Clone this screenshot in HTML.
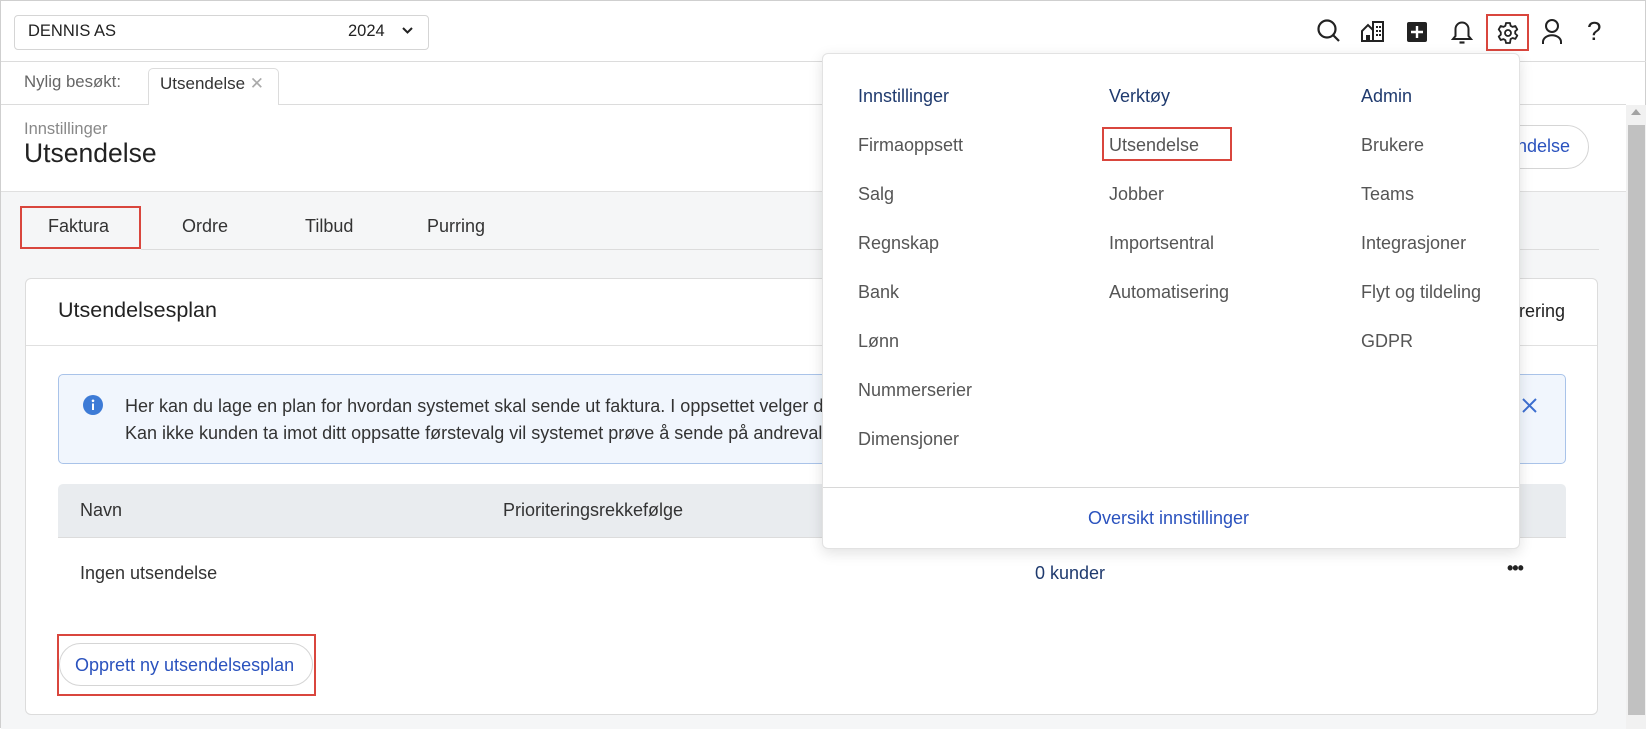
<!DOCTYPE html>
<html><head><meta charset="utf-8"><style>
*{box-sizing:border-box;margin:0;padding:0}
body{width:1646px;height:728px;overflow:hidden;font-family:"Liberation Sans",sans-serif;color:#222;background:#fff;position:relative;border:1px solid #cfcfcf}
.a{position:absolute;white-space:nowrap}
.ic{position:absolute;top:17px}
.dd div{position:absolute;font-size:18px;color:#555}
.dd .h{color:#1f3a6e;font-size:18px}
</style></head><body>
<!-- top bar -->
<div class="a" style="left:0;top:60px;width:1646px;height:1px;background:#dcdcdc"></div>
<div class="a" style="left:13px;top:14px;width:415px;height:35px;border:1px solid #d5d5d5;border-radius:4px"></div>
<div class="a" style="left:27px;top:21px;font-size:16.5px">DENNIS AS</div>
<div class="a" style="left:347px;top:21px;font-size:16.5px">2024</div>
<svg class="a" style="left:400px;top:25px" width="13" height="10" viewBox="0 0 13 10"><path d="M2 2l4.5 4.5L11 2" fill="none" stroke="#222" stroke-width="2"/></svg>
<!-- icons -->
<svg class="ic" style="left:1315px" width="26" height="26" viewBox="0 0 26 26"><circle cx="11" cy="11" r="8.5" fill="none" stroke="#222" stroke-width="2.2"/><path d="M17 17l6 6" stroke="#222" stroke-width="2.2"/></svg>
<svg class="ic" style="left:1359px" width="26" height="26" viewBox="0 0 26 26"><path d="M2 23V13l6-6 5 5V23zM13 23V4h10v19z" fill="none" stroke="#222" stroke-width="2"/><rect x="16" y="8" width="2" height="2" fill="#222"/><rect x="19" y="8" width="2" height="2" fill="#222"/><rect x="16" y="12" width="2" height="2" fill="#222"/><rect x="19" y="12" width="2" height="2" fill="#222"/><rect x="16" y="16" width="2" height="2" fill="#222"/><rect x="19" y="16" width="2" height="2" fill="#222"/><rect x="6" y="17" width="4" height="6" fill="#222"/></svg>
<svg class="ic" style="left:1406px;top:21px" width="20" height="20" viewBox="0 0 20 20"><rect width="20" height="20" rx="2" fill="#222"/><path d="M10 4v12M4 10h12" stroke="#fff" stroke-width="2.4"/></svg>
<svg class="ic" style="left:1448px" width="26" height="28" viewBox="0 0 26 28"><path d="M4 21h18l-2.5-3V11a6.5 6.5 0 0 0-13 0v7z" fill="none" stroke="#222" stroke-width="2"/><path d="M10.5 24.5h5" stroke="#222" stroke-width="2.2"/></svg>
<div class="a" style="left:1485px;top:13px;width:43px;height:37px;border:2px solid #d9463d"></div>
<svg class="ic" style="left:1495px;top:20px" width="24" height="24" viewBox="0 0 24 24"><path d="M10 2h4l.6 2.8 2 1.1 2.7-.9 2 3.4-2.1 1.9v2.3l2.1 1.9-2 3.4-2.7-.9-2 1.1L14 22h-4l-.6-2.8-2-1.1-2.7.9-2-3.4 2.1-1.9v-2.3L2.7 8.4l2-3.4 2.7.9 2-1.1z" fill="none" stroke="#222" stroke-width="1.8" stroke-linejoin="round"/><circle cx="12" cy="12" r="3" fill="none" stroke="#222" stroke-width="1.8"/></svg>
<svg class="ic" style="left:1539px" width="24" height="28" viewBox="0 0 24 28"><circle cx="12" cy="8" r="6" fill="none" stroke="#222" stroke-width="2"/><path d="M3 26v-2a8 6 0 0 1 18 0v2" fill="none" stroke="#222" stroke-width="2"/></svg>
<div class="a" style="left:1586px;top:15px;font-size:26px;color:#222">?</div>
<!-- recently visited -->
<div class="a" style="left:0;top:103px;width:1625px;height:1px;background:#dcdcdc"></div>
<div class="a" style="left:23px;top:71px;font-size:16.8px;color:#666">Nylig besøkt:</div>
<div class="a" style="left:147px;top:67px;width:131px;height:37px;border:1px solid #dcdcdc;border-bottom:none;border-radius:5px 5px 0 0;background:#fff"></div>
<div class="a" style="left:159px;top:73px;font-size:17px;color:#333">Utsendelse <span style="color:#aaa">✕</span></div>
<!-- page header -->
<div class="a" style="left:23px;top:119px;font-size:16.5px;color:#888">Innstillinger</div>
<div class="a" style="left:23px;top:137px;font-size:26.5px;color:#222">Utsendelse</div>
<div class="a" style="left:1470px;top:124px;width:118px;height:44px;border:1px solid #d5d5d5;border-radius:22px;background:#fff"></div>
<div class="a" style="right:75px;top:135px;font-size:18px;color:#2a52be">ndelse</div>
<!-- gray area -->
<div class="a" style="left:0;top:190px;width:1625px;height:538px;background:#f5f6f7;border-top:1px solid #e0e0e0"></div>
<div class="a" style="left:47px;top:215px;font-size:18px;color:#333">Faktura</div>
<div class="a" style="left:19px;top:205px;width:121px;height:43px;border:2px solid #d9463d"></div>
<div class="a" style="left:181px;top:215px;font-size:18px;color:#333">Ordre</div>
<div class="a" style="left:304px;top:215px;font-size:18px;color:#333">Tilbud</div>
<div class="a" style="left:426px;top:215px;font-size:18px;color:#333">Purring</div>
<div class="a" style="left:140px;top:248px;width:1458px;height:1px;background:#dcdcdc"></div>
<!-- card -->
<div class="a" style="left:24px;top:277px;width:1573px;height:437px;background:#fff;border:1px solid #dcdcdc;border-radius:6px"></div>
<div class="a" style="left:57px;top:297px;font-size:21.5px;color:#222">Utsendelsesplan</div>
<div class="a" style="right:80px;top:300px;font-size:18px;color:#222">rering</div>
<div class="a" style="left:25px;top:344px;width:1571px;height:1px;background:#e0e0e0"></div>
<div class="a" style="left:57px;top:373px;width:1508px;height:90px;background:#f1f6fd;border:1px solid #a9c3e9;border-radius:5px"></div>
<svg class="a" style="left:82px;top:394px" width="20" height="20" viewBox="0 0 20 20"><circle cx="10" cy="10" r="10" fill="#3d7bd6"/><rect x="9" y="8.5" width="2" height="6.5" fill="#fff"/><circle cx="10" cy="5.8" r="1.3" fill="#fff"/></svg>
<div class="a" style="left:124px;top:392px;font-size:18px;color:#333;line-height:27px">Her kan du lage en plan for hvordan systemet skal sende ut faktura. I oppsettet velger du<br>Kan ikke kunden ta imot ditt oppsatte førstevalg vil systemet prøve å sende på andrevalg</div>
<svg class="a" style="left:1520px;top:396px" width="17" height="17" viewBox="0 0 17 17"><path d="M2 2l13 13M15 2L2 15" stroke="#3d6fd0" stroke-width="2"/></svg>
<div class="a" style="left:57px;top:483px;width:1508px;height:54px;background:#e9ecef;border-radius:5px 5px 0 0;border-bottom:1px solid #dcdcdc"></div>
<div class="a" style="left:79px;top:499px;font-size:18px;color:#333">Navn</div>
<div class="a" style="left:502px;top:499px;font-size:18px;color:#333">Prioriteringsrekkefølge</div>
<div class="a" style="left:79px;top:562px;font-size:18px;color:#333">Ingen utsendelse</div>
<div class="a" style="left:1034px;top:562px;font-size:18px;color:#1f3a6e">0 kunder</div>
<div class="a" style="left:1506px;top:557px;font-size:18px;color:#222;font-weight:bold;letter-spacing:-1px">•••</div>
<div class="a" style="left:58px;top:642px;width:254px;height:43px;border:1px solid #d5d5d5;border-radius:22px;background:#fff"></div>
<div class="a" style="left:74px;top:654px;font-size:18px;color:#2a52be">Opprett ny utsendelsesplan</div>
<div class="a" style="left:56px;top:633px;width:259px;height:62px;border:2px solid #d9463d"></div>
<!-- scrollbar -->
<div class="a" style="left:1625px;top:104px;width:20px;height:624px;background:#f1f1f1"></div>
<div class="a" style="left:1630px;top:108px;width:0;height:0;border:5px solid transparent;border-bottom:6px solid #a3a3a3;border-top:none"></div>
<div class="a" style="left:1627px;top:124px;width:17px;height:590px;background:#c1c1c1"></div>
<!-- dropdown -->
<div class="a dd" style="left:821px;top:52px;width:698px;height:496px;background:#fff;border:1px solid #e2e2e2;border-radius:6px;box-shadow:0 4px 14px rgba(0,0,0,.12)">
<div class="h" style="left:35px;top:32px">Innstillinger</div>
<div style="left:35px;top:81px">Firmaoppsett</div>
<div style="left:35px;top:130px">Salg</div>
<div style="left:35px;top:179px">Regnskap</div>
<div style="left:35px;top:228px">Bank</div>
<div style="left:35px;top:277px">Lønn</div>
<div style="left:35px;top:326px">Nummerserier</div>
<div style="left:35px;top:375px">Dimensjoner</div>
<div class="h" style="left:286px;top:32px">Verktøy</div>
<div style="left:286px;top:81px">Utsendelse</div>
<div style="left:279px;top:73px;width:130px;height:34px;border:2px solid #d9463d"></div>
<div style="left:286px;top:130px">Jobber</div>
<div style="left:286px;top:179px">Importsentral</div>
<div style="left:286px;top:228px">Automatisering</div>
<div class="h" style="left:538px;top:32px">Admin</div>
<div style="left:538px;top:81px">Brukere</div>
<div style="left:538px;top:130px">Teams</div>
<div style="left:538px;top:179px">Integrasjoner</div>
<div style="left:538px;top:228px">Flyt og tildeling</div>
<div style="left:538px;top:277px">GDPR</div>
<div style="left:0;top:433px;width:696px;height:1px;background:#d8d8d8"></div>
<div style="left:265px;top:454px;color:#2a52be">Oversikt innstillinger</div>
</div>
</body></html>
